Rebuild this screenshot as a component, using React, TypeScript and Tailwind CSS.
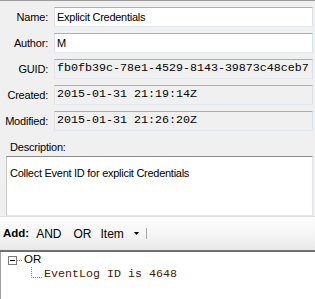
import React from 'react';

type FieldProps = { label: string; value: string; mono?: boolean; readOnly?: boolean };

const Field: React.FC<FieldProps> = ({ label, value, mono, readOnly }) => (
  <>
    <div className="text-right text-[11px] leading-none text-black tracking-[-0.2px]">{label}</div>
    <div
      className={`h-[20px] flex items-center pl-[2px] border border-t-[#abadb3] border-l-[#e2e3ea] border-r-[#dbdfe6] border-b-[#e3e9ef] overflow-hidden whitespace-nowrap ${
        readOnly ? 'bg-[#f0f0f0]' : 'bg-white'
      }`}
    >
      {mono ? (
        <span className="font-['Liberation_Mono','Courier_New',monospace] text-[11.67px] leading-none text-black">{value}</span>
      ) : (
        <span className="text-[11px] leading-none text-black tracking-[-0.27px]">{value}</span>
      )}
    </div>
  </>
);

const App: React.FC = () => {
  return (
    <div className="w-[315px] h-[299px] bg-[#f0f0f0] border-t border-[#9a9a9a] flex flex-col overflow-hidden font-['Liberation_Sans',Arial,sans-serif]">
      {/* Header fields */}
      <div className="grid grid-cols-[48px_1fr] gap-x-[6px] gap-y-[6px] items-center pt-[6px] pr-[2px]">
        <Field label="Name:" value="Explicit Credentials" />
        <Field label="Author:" value="M" />
        <Field label="GUID:" value="fb0fb39c-78e1-4529-8143-39873c48ceb7" mono readOnly />
        <Field label="Created:" value="2015-01-31 21:19:14Z" mono readOnly />
        <Field label="Modified:" value="2015-01-31 21:26:20Z" mono readOnly />
      </div>

      {/* Description */}
      <div className="pl-[10px] pt-[11px] pb-[3px] text-[11px] leading-none text-black tracking-[-0.2px]">Description:</div>
      <div className="ml-[6px] mr-[2px] h-[60px] bg-white border border-t-[#8a8a8a] border-l-[#c9c9c9] border-r-[#e2e3ea] border-b-[#e3e9ef] px-[3px] pt-[3px]">
        <span className="text-[11px] leading-none text-black tracking-[-0.27px]">Collect Event ID for explicit Credentials</span>
      </div>

      {/* Toolbar */}
      <div className="h-[36px] flex items-center bg-gradient-to-b from-[#fdfdfd] via-[#f6f6f6] to-[#e9e9e9] border-t border-[#dedede] border-b-2 border-b-[#707070] text-[12px] text-black">
        <span className="ml-[3px] font-bold text-[11.5px]">Add:</span>
        <span className="ml-[7px]">AND</span>
        <span className="ml-[12px]">OR</span>
        <span className="ml-[9px]">Item</span>
        <svg className="ml-[10px]" width="5" height="3" viewBox="0 0 5 3">
          <path d="M0 0h5L2.5 3z" fill="#000" />
        </svg>
        <div className="ml-[7px] w-px h-[11px] bg-[#a8a8a8]" />
      </div>

      {/* Tree */}
      <div className="flex-1 bg-white border-l border-[#a0a0a0] text-black">
        <div className="flex items-center h-[14px] mt-[1px] pl-[7px]">
          <svg width="9" height="9" viewBox="0 0 9 9">
            <rect x="0.5" y="0.5" width="8" height="8" fill="#fff" stroke="#7a7a7a" />
            <path d="M2 4.5h5" stroke="#000" />
          </svg>
          <svg width="7" height="9" viewBox="0 0 7 9">
            <path d="M0 4.5h6" stroke="#8a8a8a" strokeDasharray="1 1" />
          </svg>
          <span className="text-[11.5px] leading-none">OR</span>
        </div>
        <div className="flex items-end h-[15px] pl-[30px]">
          <svg width="12" height="15" viewBox="0 0 12 15">
            <path d="M0.5 0v10.5H12" fill="none" stroke="#8a8a8a" strokeDasharray="1 1" />
          </svg>
          <span className="ml-[1px] mb-[1px] font-['Liberation_Mono','Courier_New',monospace] text-[11.67px] leading-none text-[#4a1800] self-end">
            EventLog ID is 4648
          </span>
        </div>
      </div>
    </div>
  );
};

export default App;
